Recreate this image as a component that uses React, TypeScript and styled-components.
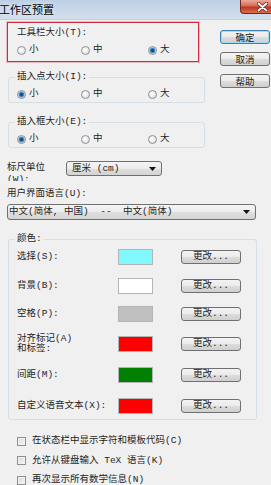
import React from "react";
import styled, { createGlobalStyle, css } from "styled-components";

const Global = createGlobalStyle`
  html, body { margin: 0; padding: 0; background: #f0f0f0; overflow: hidden; }
  body {
    font-family: "Liberation Mono", "Noto Sans CJK SC", monospace;
    font-size: 9.5px;
    color: #1e1e1e;
  }
  * { box-sizing: border-box; }
`;

const Window = styled.div`
  width: 271px;
  height: 485px;
  overflow: hidden;
  background: #f0f0f0;
  display: flex;
  flex-direction: column;
`;

const TitleBar = styled.div`
  height: 20px;
  flex: none;
  display: flex;
  justify-content: space-between;
  background: linear-gradient(#bccfe4, #d3dfec);
  border-bottom: 1px solid #c3cfdc;
`;

const Title = styled.span`
  font-family: "Noto Sans CJK SC", sans-serif;
  font-size: 11px;
  line-height: 19px;
  margin-left: -1px;
  color: #000;
  text-shadow: 0 0 5px rgba(255, 255, 255, 0.9);
`;

const CloseBtn = styled.div`
  width: 31px;
  height: 14px;
  display: flex;
  align-items: center;
  justify-content: flex-end;
  padding-right: 3px;
  background: linear-gradient(#e9aa9c 0%, #d86a52 45%, #c1341e 55%, #d9704f 100%);
  border: 1px solid #6d2a20;
  border-top: none;
  border-right: none;
  border-bottom-left-radius: 4px;
`;

const Body = styled.div`
  padding-left: 7px;
  display: flex;
  flex-direction: column;
`;

const TopRow = styled.div`
  display: flex;
  align-items: flex-start;
`;

const LeftCol = styled.div`
  width: 198px;
  display: flex;
  flex-direction: column;
`;

const RightCol = styled.div`
  margin-left: 15px;
  padding-top: 10px;
  display: flex;
  flex-direction: column;
  gap: 8px;
`;

const Btn = styled.div<{ $primary?: boolean }>`
  width: 50px;
  height: 14px;
  display: flex;
  align-items: center;
  justify-content: center;
  border: 1px solid #707070;
  border-radius: 3px;
  background: linear-gradient(#f3f3f3 0%, #ebebeb 50%, #dddddd 51%, #cfcfcf 100%);
  font-family: "Noto Sans CJK SC", sans-serif;
  font-size: 9.5px;
  line-height: 12px;
  color: #222;
  ${(p) =>
    p.$primary &&
    css`
      border-color: #3c7fb1;
      box-shadow: inset 0 0 0 1px #9fdcf5;
    `}
`;

const HighlightBox = styled.div`
  margin-top: 2px;
  width: 192px;
  height: 40px;
  border: 1px solid #cc2c42;
  box-shadow: 0 0 0 1px rgba(214, 70, 90, 0.3);
  padding: 4px 0 0 9px;
  display: flex;
  flex-direction: column;
`;

const BoxLabel = styled.div`
  line-height: 12px;
`;

const Group = styled.fieldset<{ $mt: number; $w: number; $pb?: number }>`
  margin: ${(p) => p.$mt}px 0 0 1px;
  width: ${(p) => p.$w}px;
  min-width: 0;
  padding: 0 8px ${(p) => p.$pb ?? 2}px 8px;
  border: 1px solid #d5dfe5;
  border-radius: 3px;
`;

const Legend = styled.legend`
  padding: 0 2px;
  margin-left: -2px;
  line-height: 12px;
  font-size: 9.5px;
`;

const RadioRow = styled.div<{ $mt: number }>`
  margin-top: ${(p) => p.$mt}px;
  height: 12px;
  display: grid;
  grid-template-columns: 64px 67px auto;
  align-items: center;
`;

const Option = styled.label`
  display: flex;
  align-items: center;
  gap: 3px;
  line-height: 12px;
`;

const RadioDot = styled.span<{ $on?: boolean }>`
  width: 9px;
  height: 9px;
  flex: none;
  border-radius: 50%;
  border: 1px solid #8c8f92;
  background: radial-gradient(circle at 40% 40%, #ffffff, #d8d8d8);
  ${(p) =>
    p.$on &&
    css`
      background: radial-gradient(circle, #10345c 0, #1f5d98 1.4px, #5f9fd4 2.6px, #c9dff0 3.3px, #eef3f7 3.6px);
    `}
`;

const RulerRow = styled.div`
  margin-top: 13px;
  display: flex;
  align-items: flex-start;
`;

const RulerLabel = styled.div`
  width: 59px;
  height: 20px;
  overflow: hidden;
  line-height: 12px;
  padding-top: 1px;
`;

const Select = styled.div<{ $w: number; $h: number }>`
  width: ${(p) => p.$w}px;
  height: ${(p) => p.$h}px;
  display: flex;
  align-items: center;
  justify-content: space-between;
  padding: 0 5px 0 5px;
  border: 1px solid #707070;
  border-radius: 3px;
  background: linear-gradient(#f4f4f4 0%, #ececec 50%, #dfdfdf 51%, #d3d3d3 100%);
  white-space: pre;
  line-height: 12px;
`;

const FieldLabel = styled.div`
  margin-top: 7px;
  line-height: 12px;
`;

const LangSelect = styled(Select)`
  margin-top: 4px;
  padding-left: 1px;
`;

const ColorRow = styled.div<{ $mt: number }>`
  margin-top: ${(p) => p.$mt}px;
  height: 18px;
  display: grid;
  grid-template-columns: 101px 63px 60px;
  align-items: center;
`;

const RowLabel = styled.div`
  line-height: 10px;
`;

const Swatch = styled.div<{ $c: string }>`
  width: 35px;
  height: 16px;
  background: ${(p) => p.$c};
  border: 1px solid #b5b5b5;
`;

const ChangeBtn = styled(Btn)`
  width: 60px;
  font-family: "Liberation Mono", "Noto Sans CJK SC", monospace;
`;

const CheckList = styled.div`
  margin-top: 14px;
  padding-left: 10px;
  display: flex;
  flex-direction: column;
  gap: 5.5px;
`;

const CheckRow = styled.label`
  height: 14px;
  display: flex;
  align-items: center;
  gap: 6px;
  line-height: 12px;
  white-space: nowrap;
`;

const CheckBox = styled.span`
  width: 9px;
  height: 9px;
  flex: none;
  border: 1px solid #8e8f8f;
  background: linear-gradient(135deg, #d6d6d6, #f8f8f8);
  box-shadow: inset 0 0 0 1px #f2f2f2;
`;

const Arrow = () => (
  <svg width="7" height="4" viewBox="0 0 7 4">
    <path d="M0 0h7L3.5 4z" fill="#111" />
  </svg>
);

const CloseX = () => (
  <svg width="11" height="10" viewBox="0 0 11 10">
    <path d="M1.5 1.5l8 7M9.5 1.5l-8 7" stroke="#5a1a12" strokeWidth="3.2" strokeLinecap="round" />
    <path d="M1.5 1.5l8 7M9.5 1.5l-8 7" stroke="#fff" strokeWidth="1.9" strokeLinecap="round" />
  </svg>
);

const sizes = ["小", "中", "大"];

const Radios = ({ sel, mt }: { sel: number; mt: number }) => (
  <RadioRow $mt={mt}>
    {sizes.map((s, i) => (
      <Option key={s}>
        <RadioDot $on={i === sel} />
        {s}
      </Option>
    ))}
  </RadioRow>
);

const colors: { label: React.ReactNode; c: string; mt: number }[] = [
  { label: "选择(S):", c: "#80f8ff", mt: 3 },
  { label: "背景(B):", c: "#ffffff", mt: 10.5 },
  { label: "空格(P):", c: "#c0c0c0", mt: 10.5 },
  {
    label: (
      <>
        对齐标记(A)
        <br />
        和标签:
      </>
    ),
    c: "#ff0000",
    mt: 11,
  },
  { label: "间距(M):", c: "#008000", mt: 14 },
  { label: "自定义语音文本(X):", c: "#ff0000", mt: 13 },
];

export default function App() {
  return (
    <Window>
      <Global />
      <TitleBar>
        <Title>工作区预置</Title>
        <CloseBtn>
          <CloseX />
        </CloseBtn>
      </TitleBar>
      <Body>
        <TopRow>
          <LeftCol>
            <HighlightBox>
              <BoxLabel>工具栏大小(T):</BoxLabel>
              <Radios sel={2} mt={5} />
            </HighlightBox>
            <Group $mt={9} $w={197}>
              <Legend>插入点大小(I):</Legend>
              <Radios sel={0} mt={5} />
            </Group>
            <Group $mt={13} $w={197}>
              <Legend>插入框大小(E):</Legend>
              <Radios sel={0} mt={5} />
            </Group>
          </LeftCol>
          <RightCol>
            <Btn $primary>确定</Btn>
            <Btn>取消</Btn>
            <Btn>帮助</Btn>
          </RightCol>
        </TopRow>
        <RulerRow>
          <RulerLabel>
            标尺单位
            <br />
            (W):
          </RulerLabel>
          <Select $w={96} $h={15}>
            <span>厘米 (cm)</span>
            <Arrow />
          </Select>
        </RulerRow>
        <FieldLabel>用户界面语言(U):</FieldLabel>
        <LangSelect $w={249} $h={16}>
          <span>中文(简体, 中国)  --  中文(简体)</span>
          <Arrow />
        </LangSelect>
        <Group $mt={13} $w={249} $pb={4}>
          <Legend>颜色:</Legend>
          {colors.map((r, i) => (
            <ColorRow key={i} $mt={r.mt}>
              <RowLabel>{r.label}</RowLabel>
              <Swatch $c={r.c} />
              <ChangeBtn>更改...</ChangeBtn>
            </ColorRow>
          ))}
        </Group>
        <CheckList>
          <CheckRow>
            <CheckBox />
            在状态栏中显示字符和模板代码(C)
          </CheckRow>
          <CheckRow>
            <CheckBox />
            允许从键盘输入 TeX 语言(K)
          </CheckRow>
          <CheckRow>
            <CheckBox />
            再次显示所有数学信息(N)
          </CheckRow>
        </CheckList>
      </Body>
    </Window>
  );
}
